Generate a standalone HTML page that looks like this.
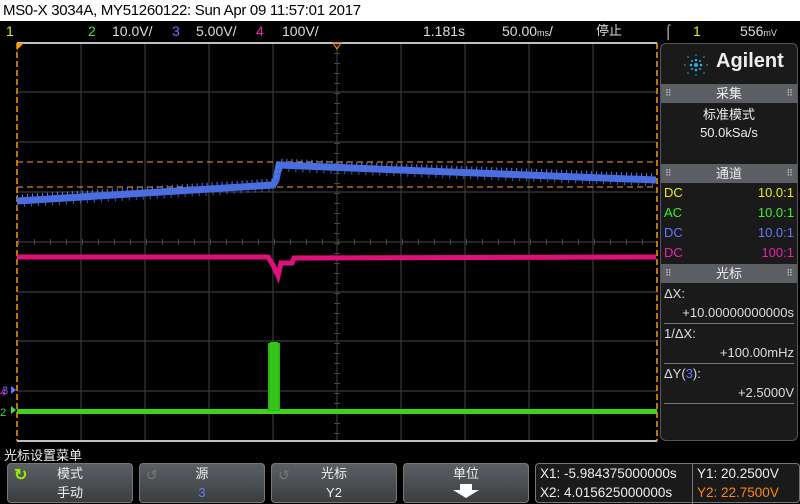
<!DOCTYPE html>
<html><head><meta charset="utf-8"><style>
*{margin:0;padding:0;box-sizing:border-box}
body{width:800px;height:503px;background:#000;overflow:hidden;position:relative;font-family:"Liberation Sans","Noto Sans CJK SC",sans-serif;color:#ddd}
.abs{position:absolute;white-space:nowrap}
#title{left:0;top:0;width:800px;height:21px;background:#fff;color:#000;font-size:15px;line-height:21px;padding-left:3px;letter-spacing:-0.3px}
.bar{font-size:14px;top:22px;line-height:18px}
.panel{left:660px;top:43px;width:138px;height:398px;background:#1a1a1a;border:1px solid #555;border-radius:6px;overflow:hidden}
.hdr{position:absolute;left:0;width:136px;height:19px;background:#5b5f63;color:#eee;font-size:13px;text-align:center;line-height:19px}
.hdr:before{content:"⠿";position:absolute;left:4px;font-size:9px;color:#ccc}
.hdr:after{content:"⠿";position:absolute;right:4px;font-size:9px;color:#ccc}
.row{position:absolute;left:3px;width:130px;font-size:13px;line-height:20px}
.btn{position:absolute;top:463px;height:40px;width:126px;background:linear-gradient(#5b5f63,#3b3e41);border:1px solid #777;border-radius:4px;color:#eee;font-size:13px;text-align:center;line-height:19px}
</style></head><body>
<div id="title" class="abs">MS0-X 3034A, MY51260122: Sun Apr 09 11:57:01 2017</div>
<div class="abs bar" style="left:6px;color:#ee0">1</div>
<div class="abs bar" style="left:88px;color:#4d4">2</div>
<div class="abs bar" style="left:112px">10.0V/</div>
<div class="abs bar" style="left:172px;color:#67f">3</div>
<div class="abs bar" style="left:196px">5.00V/</div>
<div class="abs bar" style="left:256px;color:#e2a">4</div>
<div class="abs bar" style="left:282px">100V/</div>
<div class="abs bar" style="left:423px">1.181s</div>
<div class="abs bar" style="left:502px">50.00<span style="font-size:9px">ms</span>/</div>
<div class="abs bar" style="left:596px;font-size:13px">停止</div>
<div class="abs bar" style="left:664px">⌠</div>
<div class="abs bar" style="left:693px;color:#ee0">1</div>
<div class="abs bar" style="left:740px">556<span style="font-size:9px">mV</span></div>

<svg class="abs" style="left:0;top:42px" width="660" height="400" viewBox="0 42 660 400">
<g stroke="#3a3a3a" stroke-width="1.2">
<line x1="81" y1="43" x2="81" y2="441"/><line x1="145" y1="43" x2="145" y2="441"/><line x1="209" y1="43" x2="209" y2="441"/><line x1="273" y1="43" x2="273" y2="441"/><line x1="337" y1="43" x2="337" y2="441"/><line x1="401" y1="43" x2="401" y2="441"/><line x1="465" y1="43" x2="465" y2="441"/><line x1="529" y1="43" x2="529" y2="441"/><line x1="593" y1="43" x2="593" y2="441"/>
<line x1="17" y1="92" x2="657" y2="92"/><line x1="17" y1="142" x2="657" y2="142"/><line x1="17" y1="192" x2="657" y2="192"/><line x1="17" y1="242" x2="657" y2="242"/><line x1="17" y1="292" x2="657" y2="292"/><line x1="17" y1="341" x2="657" y2="341"/><line x1="17" y1="391" x2="657" y2="391"/>
</g>
<line x1="337" y1="43" x2="337" y2="441" stroke="#444" stroke-width="6" stroke-dasharray="1 9"/>
<line x1="17" y1="242" x2="657" y2="242" stroke="#444" stroke-width="6" stroke-dasharray="1 15" stroke-dashoffset="-1"/>
<line x1="17" y1="43" x2="657" y2="43" stroke="#fff" stroke-width="1.5"/>
<line x1="17" y1="441" x2="657" y2="441" stroke="#fff" stroke-width="1.5"/>
<line x1="17" y1="43" x2="17" y2="441" stroke="#f90" stroke-width="1.5" stroke-dasharray="6 3"/>
<line x1="657" y1="43" x2="657" y2="441" stroke="#f90" stroke-width="1.5" stroke-dasharray="6 3"/>
<line x1="17" y1="162" x2="657" y2="162" stroke="#f93" stroke-width="1" stroke-dasharray="6 4"/>
<line x1="17" y1="187" x2="657" y2="187" stroke="#f93" stroke-width="1" stroke-dasharray="6 4"/>
<polygon points="17,43 24,43 17,50" fill="#f90"/>
<polygon points="333,43 341,43 337,49" fill="none" stroke="#f90"/>
<polyline points="17,201 273,185 276,180 279,165 400,170 656,180" fill="none" stroke="#4a6ee0" stroke-width="7"/>
<polyline points="17,201 273,185 276,180 279,165 400,170 656,180" fill="none" stroke="#5b7df0" stroke-width="3" stroke-dasharray="1 4" transform="translate(0,-5)"/>
<polyline points="17,201 273,185 276,180 279,165 400,170 656,180" fill="none" stroke="#3a5cc8" stroke-width="3" stroke-dasharray="1 6" transform="translate(0,5)"/>
<polyline points="17,257 268,257 273,265 278,276 281,263 292,263 294,258 656,257" fill="none" stroke="#e0107a" stroke-width="5"/>
<rect x="17" y="409" width="640" height="5" fill="#3ed21a"/>
<rect x="268" y="343" width="12" height="68" fill="#28b814"/>
<rect x="270" y="342" width="8" height="68" fill="#35c41a"/>
<text x="0" y="396" fill="#e2a" font-size="11" font-family="Liberation Sans">4</text>
<text x="2" y="394" fill="#67f" font-size="11" font-family="Liberation Sans">3</text>
<polygon points="11,386 16,390 11,394" fill="#67f"/>
<text x="0" y="416" fill="#4d4" font-size="11" font-family="Liberation Sans">2</text>
<polygon points="11,406 16,410 11,414" fill="#4d4"/>
</svg>

<div class="abs panel">
 <svg style="position:absolute;left:20px;top:8px" width="30" height="26" viewBox="0 0 30 26" fill="#2ab0e0">
  <circle cx="15" cy="13" r="2"/><circle cx="15" cy="8" r="1.3"/><circle cx="15" cy="18" r="1.3"/><circle cx="10" cy="13" r="1.3"/><circle cx="20" cy="13" r="1.3"/>
  <circle cx="15" cy="3" r="0.8"/><circle cx="15" cy="23" r="0.8"/><circle cx="4" cy="13" r="0.8"/><circle cx="26" cy="13" r="0.8"/>
  <circle cx="11" cy="9" r="1"/><circle cx="19" cy="9" r="1"/><circle cx="11" cy="17" r="1"/><circle cx="19" cy="17" r="1"/>
  <circle cx="7" cy="5" r="0.8"/><circle cx="23" cy="5" r="0.8"/><circle cx="7" cy="21" r="0.8"/><circle cx="23" cy="21" r="0.8"/>
 </svg>
 <div class="abs" style="left:55px;top:6px;font-size:20px;font-weight:bold;color:#eee">Agilent</div>
 <div class="hdr" style="top:40px">采集</div>
 <div class="row" style="top:61px;text-align:center;color:#eee">标准模式</div>
 <div class="row" style="top:79px;text-align:center;color:#eee">50.0kSa/s</div>
 <div class="hdr" style="top:120px">通道</div>
 <div class="row" style="top:139px;color:#ee0">DC<span style="float:right">10.0:1</span></div>
 <div class="row" style="top:159px;color:#4e2">AC<span style="float:right">10.0:1</span></div>
 <div class="row" style="top:179px;color:#67f">DC<span style="float:right">10.0:1</span></div>
 <div class="row" style="top:199px;color:#e2a">DC<span style="float:right">100:1</span></div>
 <div class="hdr" style="top:220px">光标</div>
 <div class="row" style="top:240px">ΔX:</div>
 <div class="row" style="top:259px;text-align:right;border-bottom:1px solid #777">+10.00000000000s</div>
 <div class="row" style="top:280px">1/ΔX:</div>
 <div class="row" style="top:299px;text-align:right;border-bottom:1px solid #777">+100.00mHz</div>
 <div class="row" style="top:320px">ΔY(<span style="color:#67f">3</span>):</div>
 <div class="row" style="top:339px;text-align:right;border-bottom:1px solid #777">+2.5000V</div>
</div>

<div class="abs" style="left:4px;top:445px;font-size:13px;color:#eee">光标设置菜单</div>
<div class="btn" style="left:7px"><span style="position:absolute;left:6px;top:2px;color:#9e0;font-size:16px;font-weight:bold">↻</span>模式<br>手动</div>
<div class="btn" style="left:139px"><span style="position:absolute;left:6px;top:2px;color:#777;font-size:14px">↺</span>源<br><span style="color:#67f">3</span></div>
<div class="btn" style="left:271px"><span style="position:absolute;left:6px;top:2px;color:#777;font-size:14px">↺</span>光标<br>Y2</div>
<div class="btn" style="left:403px">单位<br><svg width="30" height="16" viewBox="0 0 30 16"><polygon points="9,1 21,1 21,7 28,7 15,15 2,7 9,7" fill="#fff"/></svg></div>
<div class="abs" style="left:535px;top:463px;width:265px;height:40px;background:#1a1a1a;border:1px solid #777;border-radius:4px;font-size:13.5px;line-height:19px;color:#eee">
 <div class="abs" style="left:4px;top:0">X1: -5.984375000000s</div>
 <div class="abs" style="left:4px;top:19px">X2: 4.015625000000s</div>
 <div class="abs" style="left:156px;top:0;height:40px;border-left:1px solid #777"></div>
 <div class="abs" style="left:161px;top:0">Y1: 20.2500V</div>
 <div class="abs" style="left:161px;top:19px;color:#f80">Y2: 22.7500V</div>
</div>
</body></html>
